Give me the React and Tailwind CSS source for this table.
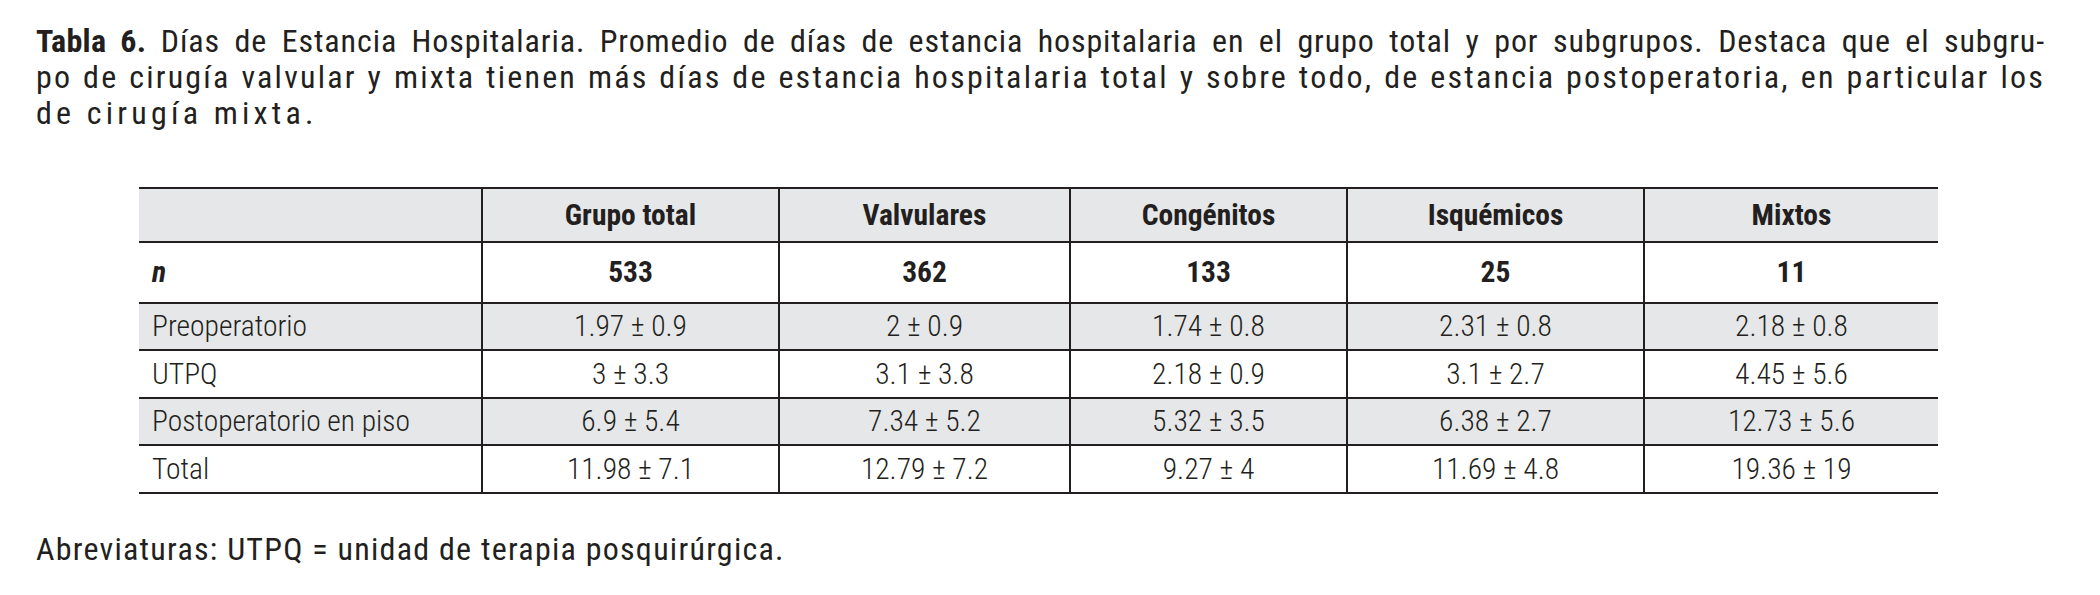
const cols = 'grid grid-cols-[342px_297px_291px_277px_297px_295px]';

const headers = ['Grupo total', 'Valvulares', 'Congénitos', 'Isquémicos', 'Mixtos'];
const counts = ['533', '362', '133', '25', '11'];

const rows = [
  { label: 'Preoperatorio', values: ['1.97 ± 0.9', '2 ± 0.9', '1.74 ± 0.8', '2.31 ± 0.8', '2.18 ± 0.8'], shaded: true, h: 'h-[47px]' },
  { label: 'UTPQ', values: ['3 ± 3.3', '3.1 ± 3.8', '2.18 ± 0.9', '3.1 ± 2.7', '4.45 ± 5.6'], shaded: false, h: 'h-[48px]' },
  { label: 'Postoperatorio en piso', values: ['6.9 ± 5.4', '7.34 ± 5.2', '5.32 ± 3.5', '6.38 ± 2.7', '12.73 ± 5.6'], shaded: true, h: 'h-[47px]' },
  { label: 'Total', values: ['11.98 ± 7.1', '12.79 ± 7.2', '9.27 ± 4', '11.69 ± 4.8', '19.36 ± 19'], shaded: false, h: 'h-[48px]' },
];

function Cell({ children, first, className = '' }) {
  return (
    <div
      className={
        'flex items-center ' +
        (first ? 'pl-[13px] ' : 'justify-center border-l-2 border-[#231f20] ') +
        className
      }
    >
      {children}
    </div>
  );
}

export default function App() {
  return (
    <div className="min-h-[595px] w-[2100px] bg-white text-[#231f20] font-['Roboto',sans-serif]">
      <div className="pt-[23px] pl-[36px] w-[2045px] text-[32px] leading-[36px] [font-stretch:87.5%]">
        <div className="whitespace-nowrap tracking-[0.9px] text-justify [text-align-last:justify]">
          <span className="font-bold tracking-[0.3px]">Tabla 6.</span> Días de Estancia Hospitalaria. Promedio de días de estancia hospitalaria en el grupo total y por subgrupos. Destaca que el subgru-
        </div>
        <div className="whitespace-nowrap tracking-[2.2px] text-justify [text-align-last:justify]">
          po de cirugía valvular y mixta tienen más días de estancia hospitalaria total y sobre todo, de estancia postoperatoria, en particular los
        </div>
        <div className="tracking-[4.2px]">de cirugía mixta.</div>
      </div>

      <div className="mt-[56px] ml-[139px] w-[1799px] border-t-2 border-[#231f20] text-[29.5px] [font-stretch:75%] font-light">
        <div className={cols + ' h-[54px] bg-[#e6e7e8] border-b-2 border-[#231f20] font-bold'}>
          <Cell first />
          {headers.map((h) => (
            <Cell key={h}>{h}</Cell>
          ))}
        </div>
        <div className={cols + ' h-[61px] border-b-2 border-[#231f20] font-bold'}>
          <Cell first>
            <span className="italic">n</span>
          </Cell>
          {counts.map((c, i) => (
            <Cell key={i}>{c}</Cell>
          ))}
        </div>
        {rows.map((r) => (
          <div
            key={r.label}
            className={cols + ' ' + r.h + ' border-b-2 border-[#231f20] ' + (r.shaded ? 'bg-[#e6e7e8]' : 'bg-white')}
          >
            <Cell first>{r.label}</Cell>
            {r.values.map((v, i) => (
              <Cell key={i}>{v}</Cell>
            ))}
          </div>
        ))}
      </div>

      <div className="mt-[38px] pl-[36px] text-[32px] leading-[34px] [font-stretch:87.5%] tracking-[1.25px]">
        Abreviaturas: UTPQ = unidad de terapia posquirúrgica.
      </div>
    </div>
  );
}
